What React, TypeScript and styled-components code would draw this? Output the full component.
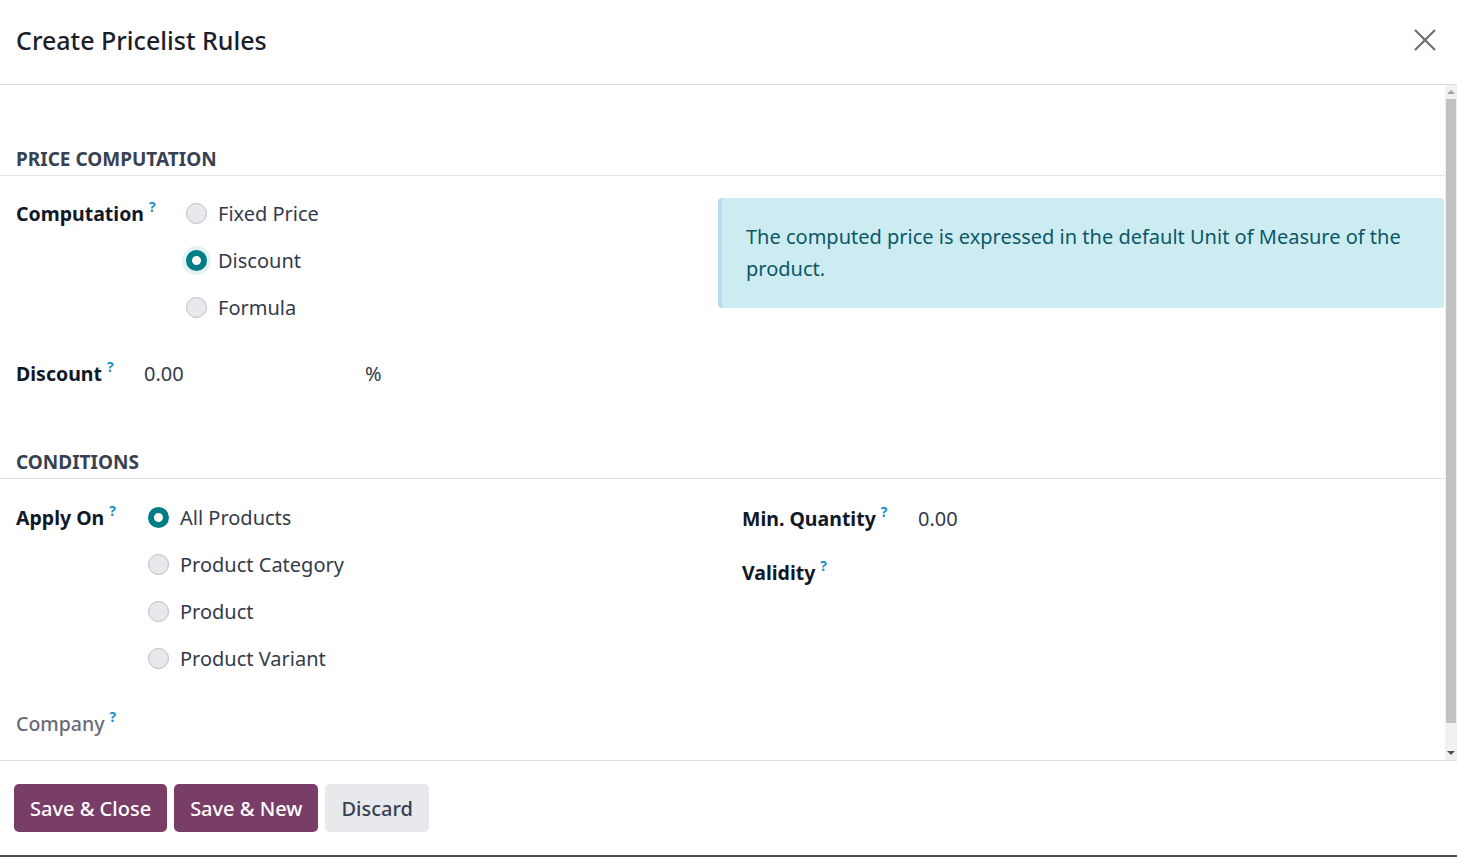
import React from "react";
import styled, { createGlobalStyle } from "styled-components";

const Global = createGlobalStyle`
  html, body { margin: 0; padding: 0; height: 100%; }
  body { font-family: "Noto Sans", "Open Sans", sans-serif; background: #fff; color: #111827; }
  * { box-sizing: border-box; }
`;

const Dialog = styled.div`
  height: 100vh;
  display: flex;
  flex-direction: column;
  border-bottom: 2px solid #4d4d4d;
  background: #fff;
`;

const Header = styled.div`
  height: 85px;
  flex: none;
  display: flex;
  align-items: center;
  justify-content: space-between;
  padding: 0 20px 5px 16px;
  border-bottom: 1px solid #dcdde1;
`;

const Title = styled.h4`
  margin: 0;
  font-size: 25px;
  font-weight: 500;
  color: #1b1d2b;
`;

const CloseBtn = styled.button`
  border: none;
  background: none;
  padding: 0;
  width: 24px;
  height: 24px;
  display: flex;
  align-items: center;
  justify-content: center;
  cursor: pointer;
`;

const BodyWrap = styled.div`
  flex: 1;
  min-height: 0;
  display: flex;
`;

const Body = styled.div`
  flex: 1;
  overflow: hidden;
  padding: 62px 0 44px 0;
`;

const ScrollTrack = styled.div`
  width: 12px;
  flex: none;
  background: #f1f1f1;
  display: flex;
  flex-direction: column;
  align-items: center;
`;

const ScrollArrow = styled.div<{ $down?: boolean; $dim?: boolean }>`
  height: 14px;
  width: 100%;
  display: flex;
  align-items: center;
  justify-content: center;
  &::before {
    content: "";
    width: 0;
    height: 0;
    border-left: 4px solid transparent;
    border-right: 4px solid transparent;
    ${(p) =>
      p.$down
        ? `border-top: 4px solid ${p.$dim ? "#a3a3a3" : "#505050"};`
        : `border-bottom: 4px solid ${p.$dim ? "#a3a3a3" : "#505050"};`}
  }
`;

const ScrollThumb = styled.div`
  width: 10px;
  height: 624px;
  background: #c1c1c1;
  margin-bottom: auto;
`;

const SectionTitle = styled.div<{ $mt?: number }>`
  margin-top: ${(p) => p.$mt ?? 0}px;
  padding: 0 16px 4px;
  line-height: 24px;
  font-size: 19px;
  font-weight: 700;
  color: #374151;
  text-transform: uppercase;
  border-bottom: 1px solid #e1e3e7;
`;

const Columns = styled.div`
  display: grid;
  grid-template-columns: 718px 1fr;
`;

const Group = styled.div<{ $pl?: number; $mt?: number }>`
  padding-left: ${(p) => p.$pl ?? 16}px;
  margin-top: ${(p) => p.$mt ?? 0}px;
  display: flex;
  flex-direction: column;
`;

const FieldRow = styled.div<{ $mt?: number }>`
  display: flex;
  align-items: flex-start;
  margin-top: ${(p) => p.$mt ?? 0}px;
`;

const Label = styled.div<{ $w: number; $muted?: boolean }>`
  width: ${(p) => p.$w}px;
  flex: none;
  height: 47px;
  display: flex;
  align-items: center;
  font-size: 19.5px;
  font-weight: ${(p) => (p.$muted ? 500 : 700)};
  color: ${(p) => (p.$muted ? "#686c78" : "#111827")};
`;

const Help = styled.sup`
  color: #1a8fc9;
  font-size: 14px;
  font-weight: 700;
  margin-left: 5px;
  position: relative;
  top: -7px;
  vertical-align: top;
`;

const RadioList = styled.div`
  display: flex;
  flex-direction: column;
`;

const RadioItem = styled.label`
  height: 47px;
  display: flex;
  align-items: center;
  gap: 11px;
  font-size: 20px;
  color: #343b4a;
`;

const RadioDot = styled.span<{ $checked?: boolean; $focus?: boolean }>`
  width: 21px;
  height: 21px;
  border-radius: 50%;
  flex: none;
  background: ${(p) => (p.$checked ? "#fff" : "#e7e9ed")};
  border: ${(p) => (p.$checked ? "6px solid #017e84" : "1px solid #b9bcc3")};
  box-shadow: ${(p) => (p.$focus ? "0 0 0 4px #e5f2f3" : "none")};
`;

const Value = styled.div<{ $w?: number }>`
  height: 47px;
  display: flex;
  align-items: center;
  font-size: 20px;
  color: #343b4a;
  width: ${(p) => (p.$w ? `${p.$w}px` : "auto")};
`;

const Alert = styled.div`
  margin: 22px 1px 0 0;
  background: #cdecf1;
  border-left: 4px solid #b3e0e8;
  border-radius: 4px;
  padding: 23px 24px;
  font-size: 20px;
  line-height: 32px;
  color: #0a5868;
`;

const Footer = styled.div`
  flex: none;
  border-top: 1px solid #dcdde1;
  padding: 23px 14px 0;
  height: 95px;
  display: flex;
  align-items: flex-start;
  gap: 7px;
`;

const Button = styled.button<{ $primary?: boolean }>`
  height: 48px;
  border: none;
  border-radius: 5px;
  padding: 0 16px;
  font-family: "Noto Sans", sans-serif;
  font-size: 20px;
  font-weight: 500;
  background: ${(p) => (p.$primary ? "#783e67" : "#e7e9ed")};
  color: ${(p) => (p.$primary ? "#ffffff" : "#374151")};
  cursor: pointer;
`;

type Opt = { label: string; checked?: boolean; focus?: boolean };

const Radios = ({ options }: { options: Opt[] }) => (
  <RadioList>
    {options.map((o) => (
      <RadioItem key={o.label}>
        <RadioDot $checked={o.checked} $focus={o.focus} />
        {o.label}
      </RadioItem>
    ))}
  </RadioList>
);

export default function App() {
  return (
    <>
      <Global />
      <Dialog>
        <Header>
          <Title>Create Pricelist Rules</Title>
          <CloseBtn aria-label="Close">
            <svg width="24" height="24" viewBox="0 0 24 24">
              <path d="M2 2 L22 22 M22 2 L2 22" stroke="#6f6f6f" strokeWidth="2.2" fill="none" />
            </svg>
          </CloseBtn>
        </Header>
        <BodyWrap>
          <Body>
            <SectionTitle>Price Computation</SectionTitle>
            <Columns>
              <Group $mt={14}>
                <FieldRow>
                  <Label $w={170}>
                    Computation<Help>?</Help>
                  </Label>
                  <Radios
                    options={[
                      { label: "Fixed Price" },
                      { label: "Discount", checked: true, focus: true },
                      { label: "Formula" },
                    ]}
                  />
                </FieldRow>
                <FieldRow $mt={19}>
                  <Label $w={128}>
                    Discount<Help>?</Help>
                  </Label>
                  <Value $w={221}>0.00</Value>
                  <Value>%</Value>
                </FieldRow>
              </Group>
              <div>
                <Alert>
                  The computed price is expressed in the default Unit of Measure of the product.
                </Alert>
              </div>
            </Columns>
            <SectionTitle $mt={53}>Conditions</SectionTitle>
            <Columns>
              <Group $mt={15}>
                <FieldRow>
                  <Label $w={132}>
                    Apply On<Help>?</Help>
                  </Label>
                  <Radios
                    options={[
                      { label: "All Products", checked: true },
                      { label: "Product Category" },
                      { label: "Product" },
                      { label: "Product Variant" },
                    ]}
                  />
                </FieldRow>
                <FieldRow $mt={18}>
                  <Label $w={132} $muted>
                    Company<Help>?</Help>
                  </Label>
                </FieldRow>
              </Group>
              <Group $pl={24} $mt={16}>
                <FieldRow>
                  <Label $w={176}>
                    Min. Quantity<Help>?</Help>
                  </Label>
                  <Value>0.00</Value>
                </FieldRow>
                <FieldRow $mt={7}>
                  <Label $w={176}>
                    Validity<Help>?</Help>
                  </Label>
                </FieldRow>
              </Group>
            </Columns>
          </Body>
          <ScrollTrack aria-hidden="true">
            <ScrollArrow $dim />
            <ScrollThumb />
            <ScrollArrow $down />
          </ScrollTrack>
        </BodyWrap>
        <Footer>
          <Button $primary>Save &amp; Close</Button>
          <Button $primary>Save &amp; New</Button>
          <Button>Discard</Button>
        </Footer>
      </Dialog>
    </>
  );
}
